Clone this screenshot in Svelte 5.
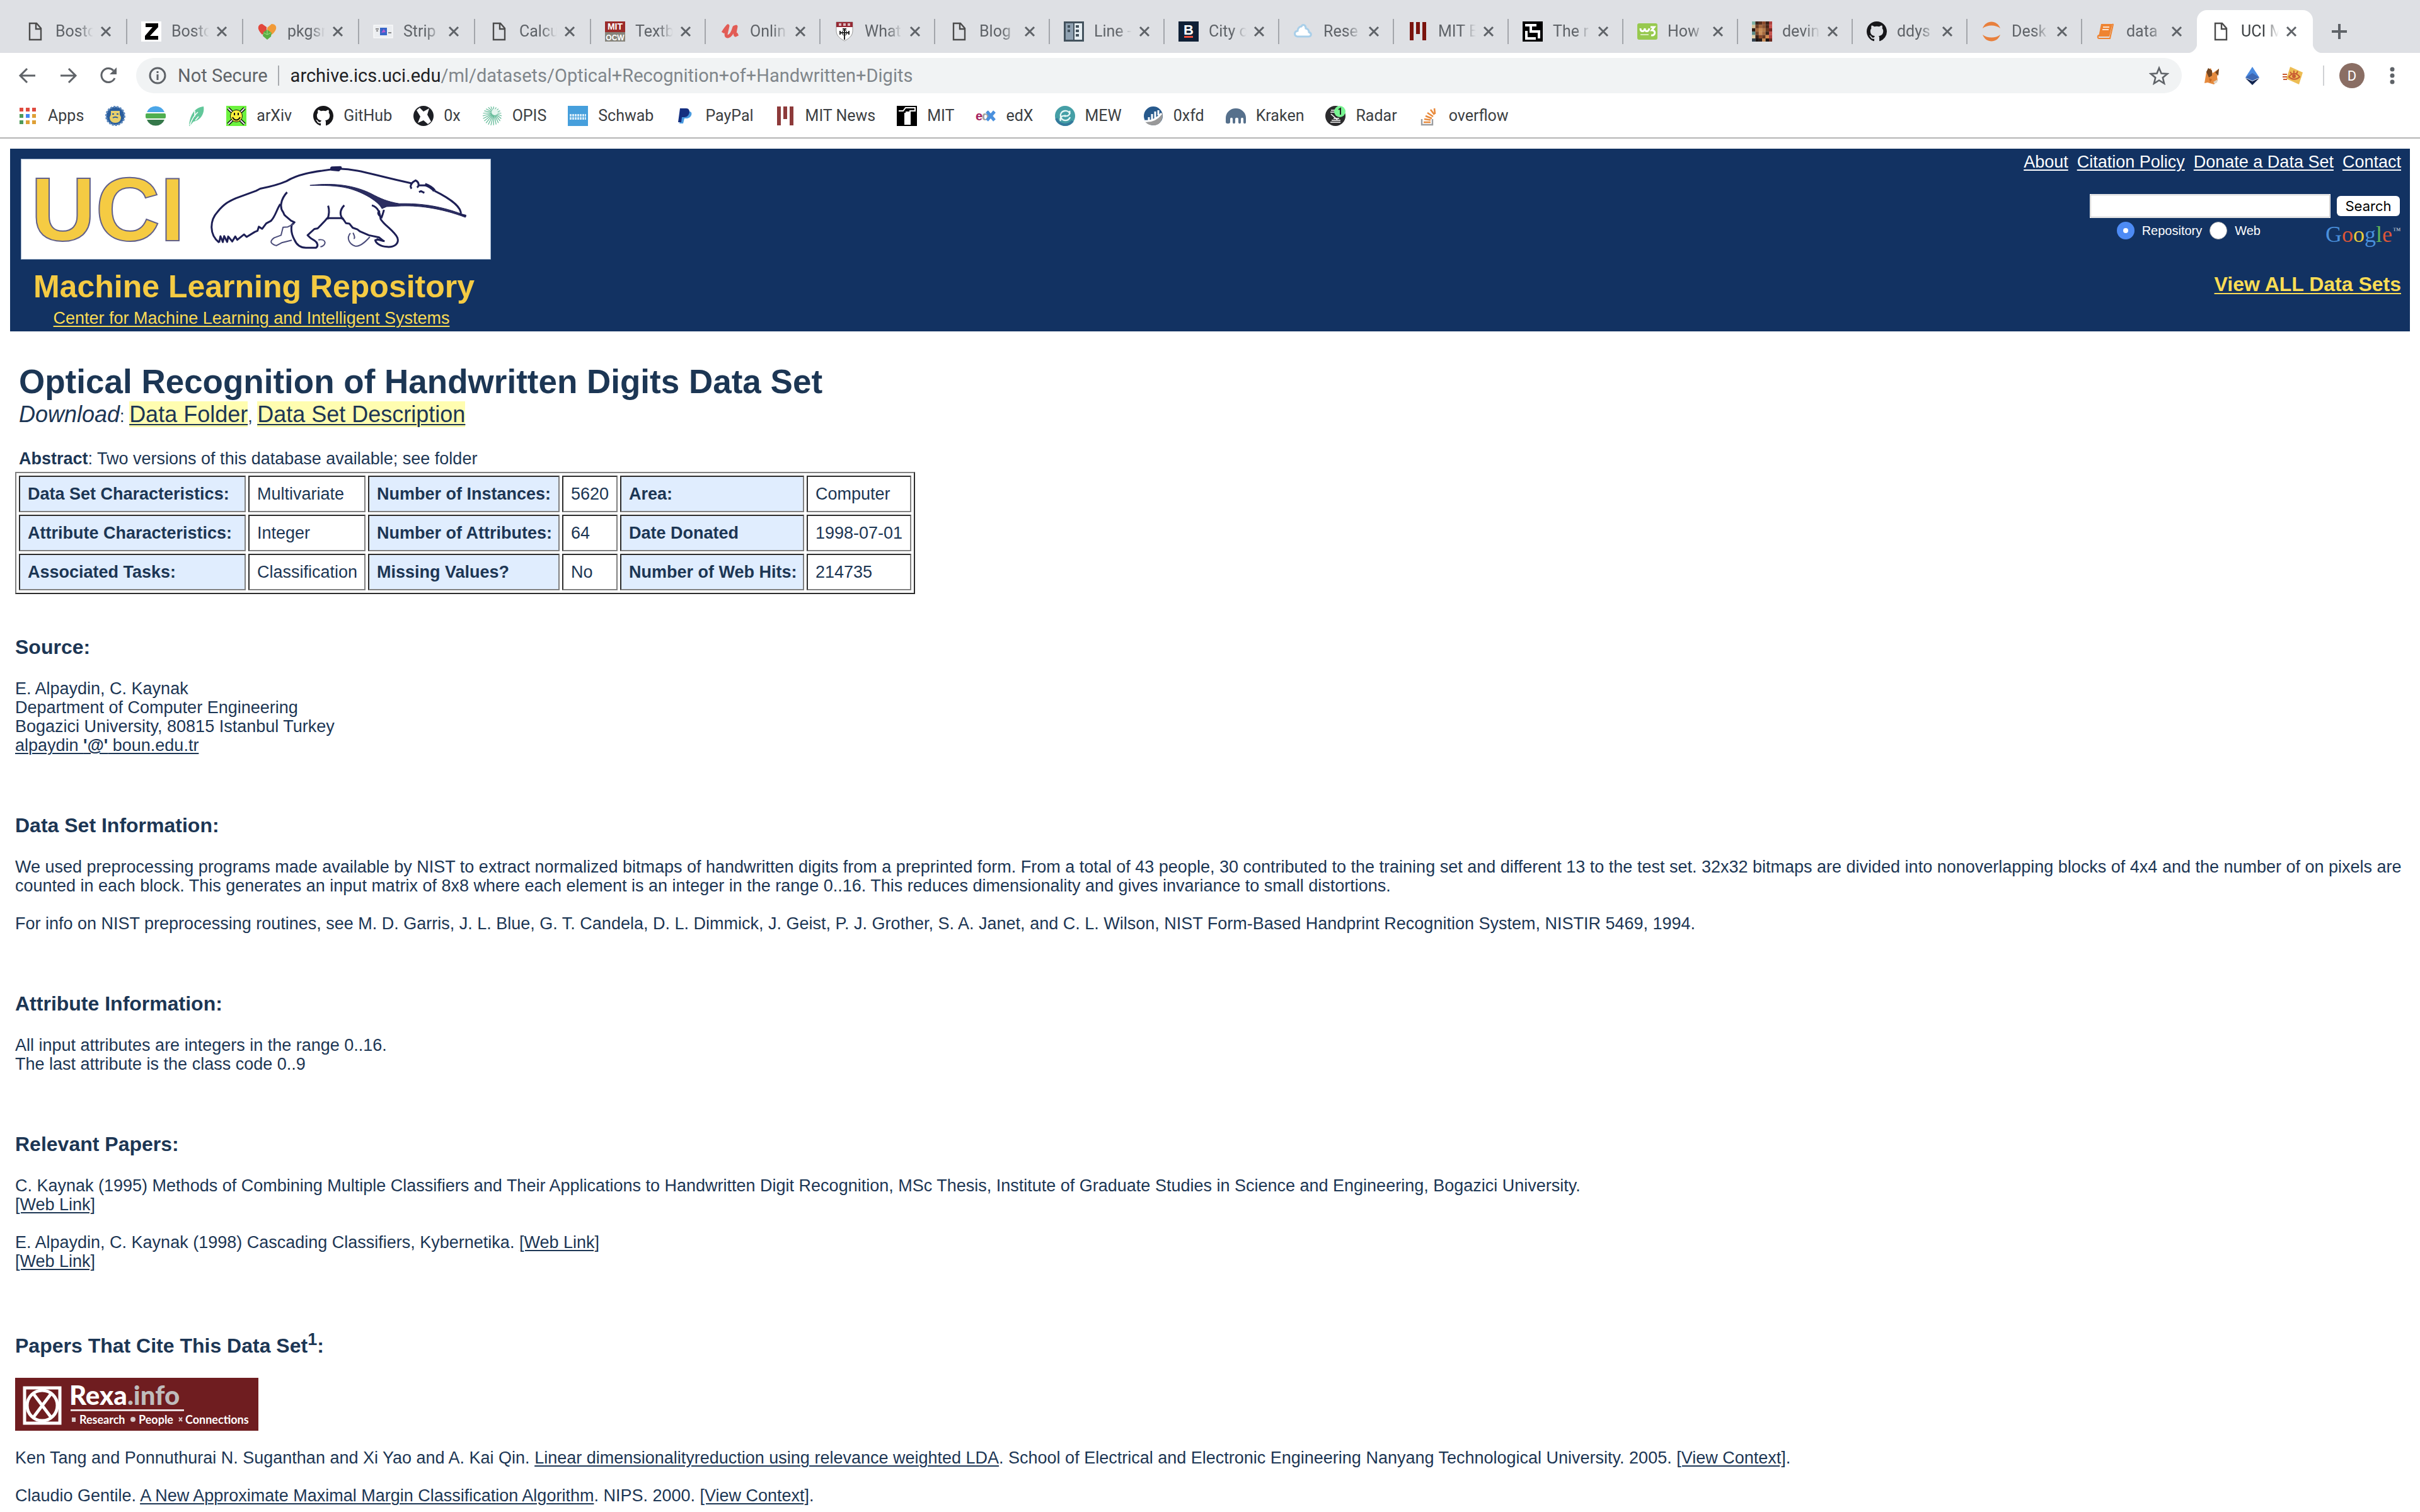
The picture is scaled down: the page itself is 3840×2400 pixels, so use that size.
<script>
  const tabs = [
    { icon: 'page', title: 'Bosto' },
    { icon: 'zillow', title: 'Bosto' },
    { icon: 'hearts', title: 'pkgsr' },
    { icon: 'strip', title: 'Strip' },
    { icon: 'page', title: 'Calcu' },
    { icon: 'ocw', title: 'Textb' },
    { icon: 'udemy', title: 'Onlin' },
    { icon: 'shield', title: 'What' },
    { icon: 'page', title: 'Blog' },
    { icon: 'building', title: 'Line -' },
    { icon: 'boston', title: 'City o' },
    { icon: 'cloud', title: 'Rese' },
    { icon: 'mit', title: 'MIT E' },
    { icon: 'maze', title: 'The r' },
    { icon: 'w3', title: 'How' },
    { icon: 'photo', title: 'devin' },
    { icon: 'github', title: 'ddys' },
    { icon: 'jupyter', title: 'Desk' },
    { icon: 'book', title: 'data' },
    { icon: 'page', title: 'UCI M', active: true }
  ];

  const bookmarks = [
    { icon: 'apps', label: 'Apps' },
    { icon: 'seal', label: '' },
    { icon: 'stripes', label: '' },
    { icon: 'feather', label: '' },
    { icon: 'arxiv', label: 'arXiv' },
    { icon: 'github', label: 'GitHub' },
    { icon: 'zerox', label: '0x' },
    { icon: 'opis', label: 'OPIS' },
    { icon: 'schwab', label: 'Schwab' },
    { icon: 'paypal', label: 'PayPal' },
    { icon: 'mitnews', label: 'MIT News' },
    { icon: 'mitt', label: 'MIT' },
    { icon: 'edx', label: 'edX' },
    { icon: 'mew', label: 'MEW' },
    { icon: 'oxfd', label: '0xfd' },
    { icon: 'kraken', label: 'Kraken' },
    { icon: 'radar', label: 'Radar' },
    { icon: 'overflow', label: 'overflow' }
  ];

  const facts = [
    ['Data Set Characteristics:', 'Multivariate', 'Number of Instances:', '5620', 'Area:', 'Computer'],
    ['Attribute Characteristics:', 'Integer', 'Number of Attributes:', '64', 'Date Donated', '1998-07-01'],
    ['Associated Tasks:', 'Classification', 'Missing Values?', 'No', 'Number of Web Hits:', '214735']
  ];

  const rays = Array.from({ length: 22 }, (_, i) => {
    const a = (i * Math.PI) / 11;
    return { x: 16 + 15 * Math.cos(a), y: 16 + 15 * Math.sin(a) };
  });

  const photo = [
    '#7fb3a6', '#3a2218', '#5a2f1c', '#8c4a2a', '#3a2218', '#b0413e',
    '#d7c39a', '#6b3a20', '#a5683c', '#8a5330', '#4a2616', '#c8524c',
    '#2d1a12', '#a5683c', '#c98e58', '#b47a48', '#6b3a20', '#7b2420',
    '#5c8c88', '#7a4526', '#c98e58', '#a5683c', '#3a2218', '#c8524c',
    '#e0cfa8', '#3a2218', '#8c4a2a', '#6b3a20', '#d58a4e', '#b0413e',
    '#33414f', '#1c1512', '#2a1d18', '#c98e58', '#1c1512', '#6d2a22'
  ];

  let scope = $state('repository');
  let query = $state('');
</script>

{#snippet icon(name)}
  <svg class="icon" viewBox="0 0 32 32" aria-hidden="true">
    {#if name === 'page'}
      <path d="M7 3h11l7 8v18H7z M17 3v9h8" fill="none" stroke="#4b4b4b" stroke-width="2.4" />
    {:else if name === 'zillow'}
      <rect width="32" height="32" fill="#fff" />
      <path d="M7 3h20v6L14 23h13v6H6v-6L18 9H7z" fill="#000" />
    {:else if name === 'hearts'}
      <path d="M15 9l-7-5C4 4 1 7 2 12c1 3 3 6 6 9l7-5z" fill="#e2473c" />
      <path d="M16 10l7-6c5 0 8 3 7 8-1 3-4 7-7 9l-7-5z" fill="#f19a37" />
      <path d="M16 13l7 5-1 6-6 5-7-6 1-6z" fill="#58ae42" />
      <path d="M16 13v8l6-3M16 21l-6-3" stroke="#a5dc88" fill="none" />
    {:else if name === 'strip'}
      <rect x="1" y="6" width="30" height="20" fill="#eceef1" stroke="#fff" />
      <rect x="11" y="10" width="11" height="12" fill="#3766c8" />
      <path d="M13 18l4-6 3 5z" fill="#b65ad0" />
      <path d="M4 12h5M5 15h3M24 18h5" stroke="#888" stroke-width="2" />
    {:else if name === 'ocw'}
      <rect width="32" height="17" fill="#9c2b29" /><rect y="17" width="32" height="15" fill="#86847b" />
      <text x="16" y="13" class="tiny w" text-anchor="middle">MIT</text>
      <text x="16" y="30" class="tiny w narrow" text-anchor="middle">OCW</text>
    {:else if name === 'udemy'}
      <path d="M5 18c3-5 6-9 8-11-1 7-6 18 0 17 5-1 8-8 10-15l3-1c-1 6-3 13-1 14l4-2" fill="none" stroke="#e25c55" stroke-width="5" stroke-linejoin="round" />
    {:else if name === 'shield'}
      <path d="M3 1h26v14c0 9-8 13-13 16C11 28 3 24 3 15z" fill="#fff" stroke="#999" />
      <path d="M3 1h26v8H3z" fill="#962a35" />
      <path d="M7 5h4m3 0h4m3 0h4" stroke="#d9b9bd" stroke-width="4" />
      <path d="M16 11v18M8 18h16M13 12h6M9 15v6M23 15v6" stroke="#222" stroke-width="2" /><circle cx="16" cy="18" r="4" fill="none" stroke="#222" />
    {:else if name === 'building'}
      <rect width="32" height="32" fill="#43525d" /><rect x="3" y="3" width="12" height="26" fill="#8fa1b1" /><rect x="17" y="3" width="12" height="26" fill="#e6eef2" />
      <path d="M6 8h4M6 15h4M19 8h5M19 15h5M19 22h5" stroke="#43525d" stroke-width="4" />
    {:else if name === 'boston'}
      <rect width="32" height="32" fill="#0f2036" />
      <text x="16" y="21" class="mono-b w" text-anchor="middle">B</text>
      <rect x="9" y="23" width="14" height="3" fill="#f0523f" />
    {:else if name === 'cloud'}
      <path d="M7 24c-6-1-6-8 0-9 0-5 4-7 6-7 2-4 7-3 7 3 4 1 5 4 5 6 5 2 4 7-1 7z" fill="#fff" stroke="#a9cfe9" stroke-width="3" />
    {:else if name === 'mit'}
      <path d="M6 1v29M16 1v19M26 1v29" stroke="#7a140e" stroke-width="6" />
    {:else if name === 'maze'}
      <rect width="32" height="32" fill="#000" />
      <path d="M4 6h9v10h13v11M22 6h-9M6 15v12h15" fill="none" stroke="#fff" stroke-width="4" />
    {:else if name === 'w3'}
      <rect y="3" width="32" height="26" rx="3" fill="#97c94f" />
      <path d="M5 11c0 6 6 6 7 0 0 6 6 6 7 0M21 9h6l-4 5c7 0 6 9-1 8" fill="none" stroke="#fff" stroke-width="3" />
      <path d="M5 21h13" stroke="#d8ecbb" stroke-width="2" />
    {:else if name === 'photo'}
      {#each photo as c, i}
        <rect x={(i % 6) * 5.4} y={Math.floor(i / 6) * 5.4} width="5.5" height="5.5" fill={c} />
      {/each}
    {:else if name === 'github'}
      <g transform="scale(2)"><path fill="#17171a" d="M8 0C3.58 0 0 3.58 0 8c0 3.54 2.29 6.53 5.47 7.59.4.07.55-.17.55-.38v-1.49c-2.23.49-2.7-.94-2.7-.94-.36-.92-.89-1.17-.89-1.17-.73-.5.05-.49.05-.49.81.06 1.23.83 1.23.83.72 1.23 1.88.87 2.34.67.07-.52.28-.87.51-1.07-1.78-.2-3.64-.89-3.64-3.95 0-.87.31-1.59.82-2.15-.08-.2-.36-1.02.08-2.12 0 0 .67-.21 2.2.82a7.6 7.6 0 0 1 4 0c1.53-1.04 2.2-.82 2.2-.82.44 1.1.16 1.92.08 2.12.51.56.82 1.27.82 2.15 0 3.07-1.87 3.75-3.65 3.95.29.25.54.73.54 1.48v2.2c0 .21.15.46.55.38A8 8 0 0 0 16 8c0-4.42-3.58-8-8-8z" /></g>
    {:else if name === 'jupyter'}
      <path d="M2 11c5-14 23-14 28 0-7-6-21-6-28 0zM2 21c5 14 23 14 28 0-7 6-21 6-28 0z" fill="#e8803d" />
    {:else if name === 'book'}
      <path d="M8 4h18l-5 20H4z" fill="#ef8432" /><path d="M26 4l1 1-5 22H5c-3 0-3-5 0-5h15" fill="none" stroke="#ef8432" stroke-width="2" />
      <path d="M11 9h10M10 13h10" stroke="#fff" stroke-width="1.6" />
    {:else if name === 'apps'}
      {#each ['#df4a3f', '#df4a3f', '#df4a3f', '#4e9a5a', '#4285f4', '#dfa036', '#4e9a5a', '#dfa036', '#dfa036'] as c, i}
        <rect x={3 + (i % 3) * 10} y={3 + Math.floor(i / 3) * 10} width="6" height="6" fill={c} />
      {/each}
    {:else if name === 'seal'}
      <circle cx="16" cy="16" r="14.5" fill="#2a5d9c" stroke="#5c88bd" stroke-width="3" stroke-dasharray="3 2" />
      <path d="M9 8h14v6l2 4c0 6-4 9-9 9s-9-3-9-9l2-4z" fill="#e8cf6a" /><path d="M11 13h3m4 0h3M12 19c3-2 5-2 8 0" stroke="#2a5d9c" stroke-width="2" fill="none" />
    {:else if name === 'stripes'}
      <path d="M2 10a15 15 0 0 1 28 0z" fill="#4ba6e8" /><rect y="12" width="32" height="8" rx="2" fill="#4fae50" /><path d="M2 22a15 15 0 0 0 28 0z" fill="#35784a" />
    {:else if name === 'feather'}
      <path d="M5 32C6 17 12 3 28 1c2 10-4 22-16 24l-6 7z" fill="#62c79a" /><path d="M6 31C10 20 14 14 19 10M14 8v9M20 17l-5 6" stroke="#fff" stroke-width="1.6" fill="none" />
    {:else if name === 'arxiv'}
      <rect width="32" height="32" fill="#6cf23e" /><path d="M3 4l26 25M29 4L3 29" stroke="#111" stroke-width="5" /><path d="M3 4l26 25M29 4L3 29" stroke="#eee" stroke-width="2" />
      <circle cx="16" cy="16" r="9.5" fill="#fdf13b" stroke="#111" /><path d="M13 11v4m6-4v4M10 18c3 6 9 6 12 0" stroke="#111" stroke-width="2" fill="none" />
    {:else if name === 'zerox'}
      <circle cx="16" cy="16" r="16" fill="#1d1f24" />
      <path d="M5 7l5-4 6 6 9-5-3 10 6 11-5 4-7-6-9 4 4-10z" fill="#fff" />
    {:else if name === 'opis'}
      {#each rays as r}
        <path d="M19 11L{r.x} {r.y}" stroke="#5bb793" stroke-width="1.2" />
      {/each}
      <circle cx="20" cy="10" r="5" fill="#e6f6ef" />
    {:else if name === 'schwab'}
      <rect width="32" height="32" fill="#469fdc" /><path d="M3 15h26M3 20h26" stroke="#d4eaf8" stroke-width="4" stroke-dasharray="3 1" />
    {:else if name === 'paypal'}
      <path d="M13 9h10c6 0 4 11-5 11h-3l-2 8H7z" fill="#4a9be0" /><path d="M8 4h10c8 0 6 14-3 14h-4l-1 8H5z" fill="#142f80" />
    {:else if name === 'mitnews'}
      <path d="M6 1v30M16 1v20M26 1v30" stroke="#8d3a3a" stroke-width="6" />
    {:else if name === 'mitt'}
      <rect width="32" height="32" fill="#000" /><path d="M3 8h7l4-5h15v5h-8v21h-8V11" stroke="#fff" stroke-width="2" fill="none" /><rect x="14" y="9" width="6" height="20" fill="#fff" />
    {:else if name === 'edx'}
      <text x="0" y="23" class="edx" fill="#a62360">e</text><text x="10" y="23" class="edx" fill="#a0a0a0">d</text>
      <path d="M18 9l12 14M30 9L18 23" stroke="#4a90dd" stroke-width="5" />
    {:else if name === 'mew'}
      <circle cx="16" cy="16" r="16" fill="#459fa6" /><path d="M2 20A15 15 0 0 0 28 24" stroke="#347a9c" stroke-width="4" fill="none" />
      <path d="M24 13c-4-9-17-5-15 4 2 8 12 8 15 1M23 8c2 6-3 10-8 7M9 24c-2-6 3-10 8-7" fill="none" stroke="#e7f7f5" stroke-width="2.4" />
    {:else if name === 'oxfd'}
      <circle cx="16" cy="16" r="15" fill="#27598c" /><path d="M3 25c10 2 21-4 27-15 3 11-4 21-13 21-7 0-12-3-14-6z" fill="#999" />
      <path d="M9 23v-5M14 22v-9M19 20V9M24 15V7" stroke="#fff" stroke-width="3" /><path d="M3 24c10 1 19-3 26-12" stroke="#fff" stroke-width="3" fill="none" />
    {:else if name === 'kraken'}
      <path d="M0 26v-7a16 15 0 0 1 32 0v7c0 3-4 3-4 0v-5c0-3-4-3-4 0v5c0 3-4 3-4 0v-5c0-3-5-3-5 0v5c0 3-4 3-4 0v-5c0-3-4-3-4 0v5c0 3-7 3-7 0z" fill="#56708c" />
    {:else if name === 'radar'}
      <circle cx="16" cy="16" r="16" fill="#2b2b2d" />
      <path d="M9 7h12M8 10h10M8 26h16M10 23h14M13 20h9M9 13l10 9" stroke="#fff" stroke-width="1.6" /><circle cx="23" cy="9" r="9" fill="#79f592" /><path d="M21 6l3-2v10" stroke="#222" stroke-width="2" fill="none" />
    {:else if name === 'overflow'}
      <path d="M5 21v9h17v-9" fill="none" stroke="#9b9da0" stroke-width="2.4" /><path d="M8 26h11M9 21l10 1.500M11 16l10 4M14 11l9 6M19 6l6 8M25 4l1 9" stroke="#e88a3c" stroke-width="2.600" />
    {:else if name === 'back'}
      <path d="M28 16H5M15 5L4 16l11 11" class="line" />
    {:else if name === 'forward'}
      <path d="M4 16h23M17 5l11 11-11 11" class="line" />
    {:else if name === 'reload'}
      <path d="M26 20A11 11 0 1 1 24 8" class="line" /><path d="M29 3v11H18z" fill="#5f6368" />
    {:else if name === 'info'}
      <circle cx="16" cy="16" r="12" class="line" /><path d="M16 14v9M16 9v3" class="line" />
    {:else if name === 'star'}
      <path d="M16 4l3.500 8.500 9.500.700-7.200 6 2.300 9.300-8.100-5-8.100 5 2.300-9.300-7.200-6 9.500-.700z" class="line thin" />
    {:else if name === 'fox'}
      <path d="M7 10l7-6 3 8 10-7-3 13 1 6-6 6-10-3-5 1z" fill="#e58a3e" /><path d="M7 10l3-6 6 4v8l-5 3zM27 5l-1 11-5-5z" fill="#714522" /><path d="M18 26l7-4-1 5-4 2z" fill="#ddd4c6" /><path d="M11 20l5 2-3 5z" fill="#c76a23" />
    {:else if name === 'eth'}
      <path d="M16 2l11 17-11 5-11-5z" fill="#4a8ae0" /><path d="M16 12l11 7-11 5-11-5z" fill="#3d68b4" /><path d="M5 20l11 5 11-5-11 11z" fill="#11244f" />
    {:else if name === 'eye'}
      <path d="M12 2l20 9-6 19-20-9z" fill="#edbd54" /><path d="M10 18c5-7 12-7 17 0-5 5-12 5-17 0zM12 10l2 3m4-5v4m6-3l-2 4M0 14h7M0 18h7M1 22h6" fill="none" stroke="#c85b32" stroke-width="2" /><circle cx="18" cy="17" r="3" fill="#c85b32" />
    {:else if name === 'menu'}
      <circle cx="16" cy="6" r="3.500" fill="#5f6368" /><circle cx="16" cy="16" r="3.500" fill="#5f6368" /><circle cx="16" cy="26" r="3.500" fill="#5f6368" />
    {:else if name === 'plus'}
      <path d="M16 4v24M4 16h24" class="line heavy" />
    {/if}
  </svg>
{/snippet}

<div class="browser">
  <div class="tabstrip">
    {#each tabs as tab}
      <div class="tab" class:active={tab.active}>
        {@render icon(tab.icon)}
        <span class="title">{tab.title}</span>
        <button class="close" aria-label="Close tab">
          <svg viewBox="0 0 18 18"><path d="M2 2l14 14M16 2L2 16" /></svg>
        </button>
      </div>
    {/each}
    <button class="bare newtab" aria-label="New tab">{@render icon('plus')}</button>
  </div>

  <div class="toolbar">
    <button class="bare" aria-label="Back">{@render icon('back')}</button>
    <button class="bare" aria-label="Forward">{@render icon('forward')}</button>
    <button class="bare" aria-label="Reload">{@render icon('reload')}</button>
    <div class="omnibox">
      {@render icon('info')}
      <span class="insecure">Not Secure</span>
      <span class="rule"></span>
      <span class="url"><b>archive.ics.uci.edu</b>/ml/datasets/Optical+Recognition+of+Handwritten+Digits</span>
      <button class="bare" aria-label="Bookmark this page">{@render icon('star')}</button>
    </div>
    <button class="bare" aria-label="Fox wallet">{@render icon('fox')}</button>
    <button class="bare" aria-label="Ether">{@render icon('eth')}</button>
    <button class="bare" aria-label="Eye extension">{@render icon('eye')}</button>
    <span class="rule light"></span>
    <button class="avatar" aria-label="Profile">D</button>
    <button class="bare" aria-label="Menu">{@render icon('menu')}</button>
  </div>

  <nav class="bookmarks" aria-label="Bookmarks">
    {#each bookmarks as b}
      <a href="#{b.icon}" aria-label={b.label || b.icon}>
        {@render icon(b.icon)}
        {#if b.label}<span>{b.label}</span>{/if}
      </a>
    {/each}
  </nav>
</div>

<header class="banner">
  <div class="brand">
    <div class="logo">
      <span class="uci">UCI</span>
      <svg class="anteater" viewBox="600 97 856 479" preserveAspectRatio="none" role="img" aria-label="Anteater">
        <path d="M650 497C620 460 622 390 645 350C665 310 680 298 700 284L760 248L772 238C810 226 830 216 850 202C880 172 920 156 1005 142C1070 145 1100 170 1222 212" />
        <path class="thick" d="M985 139L1010 137L1005 147L985 144zM1262 218Q1280 228 1290 248" />
        <path d="M650 497l4-30 7 28 4-29 9 28 3-26 12 24 9-24 6 16 20-26 8 12 24-24 8-5 4-20 10 10 12-26 14-12C818 370 820 340 832 312" />
        <path d="M852 255C832 290 830 330 840 350l4 14 4 6 16 22 10 8-8 12c-4 30 2 55 8 72 6 24 18 38 34 38h30c8-8 4-26-4-34l-12-12-9-14 20-30 10-3 22-37 6-12h36l10 0 10 24 10 2 10 20 14 8 8 10 26 18 30 10 14 18" />
        <path class="faint" d="M872 408l-18 14-14 2-6 38-20 12c-16 18-10 30 6 38l16-14 30-12M945 484c24-6 26 26 6 34" />
        <path d="M974 320q6 30-2 66M1022 318q-20 34-4 68" />
        <path d="M1104 318c20 10 24 40 26 66 12 32 40 56 50 90 6 30-10 46-30 44-24-2-34-20-36-32 10-8 14 2 28 4M1118 480l22 10M1128 345q-12 10 4 30M1140 340q-4 24-8 40" />
        <path class="faint" d="M1048 450q8 26 2 28M1040 452c-12 22-4 52 14 62 16 6 34-26 44-44" />
        <path class="fill" d="M920 222C1000 206 1060 228 1102 262C1130 286 1150 300 1185 310C1250 308 1310 320 1384 368L1382 376C1310 332 1240 316 1180 322L1148 324L1134 334C1124 300 1080 256 1034 236C1000 222 960 222 920 222z" />
        <path d="M1290 248C1340 288 1372 330 1368 362L1384 368M1222 238c-8-16 4-34 12-40 10 8 12 26 4 34M1244 222l20 0M1244 254l6-4 10 8" />
      </svg>
    </div>
    <div class="mlr">Machine Learning Repository</div>
    <a class="cml" href="#cml">Center for Machine Learning and Intelligent Systems</a>
  </div>

  <div class="side">
    <nav class="links" aria-label="Site">
      <a href="#about">About</a>
      <a href="#citation">Citation Policy</a>
      <a href="#donate">Donate a Data Set</a>
      <a href="#contact">Contact</a>
    </nav>
    <form class="search" onsubmit={(e) => e.preventDefault()}>
      <div class="row">
        <input type="text" aria-label="Search" bind:value={query} />
        <button type="submit">Search</button>
      </div>
      <div class="scope">
        <div class="choices">
          <input type="radio" id="repo" name="scope" value="repository" bind:group={scope} />
          <label for="repo">Repository</label>
          <input type="radio" id="web" name="scope" value="web" bind:group={scope} />
          <label for="web">Web</label>
        </div>
        <svg class="google" viewBox="0 0 120 48" role="img" aria-label="Google">
          <text x="0" y="34"><tspan fill="#4a90dc">G</tspan><tspan fill="#dd5638">o</tspan><tspan fill="#e8cd3c">o</tspan><tspan fill="#4a90dc">g</tspan><tspan fill="#63b558">l</tspan><tspan fill="#dd5638">e</tspan></text>
          <text x="107" y="20" class="tm">™</text>
        </svg>
      </div>
    </form>
    <a class="all" href="#datasets">View ALL Data Sets</a>
  </div>
</header>

<main>
  <div class="intro">
    <h1>Optical Recognition of Handwritten Digits Data Set</h1>
    <p class="download"><i>Download</i><small>:&nbsp;</small><a href="#folder">Data Folder</a><small>,&nbsp;</small><a href="#description">Data Set Description</a></p>
    <p class="abstract"><b>Abstract</b>: Two versions of this database available; see folder</p>
  </div>

  <table>
    <colgroup><col class="c1" /><col class="c2" /><col class="c3" /><col class="c4" /><col class="c5" /><col class="c6" /></colgroup>
    <tbody>
      {#each facts as row}
        <tr>
          {#each row as cell, i}
            {#if i % 2 === 0}<th scope="row">{cell}</th>{:else}<td>{cell}</td>{/if}
          {/each}
        </tr>
      {/each}
    </tbody>
  </table>

  <section>
    <h2>Source:</h2>
    <p>E. Alpaydin, C. Kaynak<br />Department of Computer Engineering<br />Bogazici University, 80815 Istanbul Turkey<br /><a href="#mail">alpaydin <b>'@'</b> boun.edu.tr</a></p>
  </section>

  <section>
    <h2>Data Set Information:</h2>
    <p>We used preprocessing programs made available by NIST to extract normalized bitmaps of handwritten digits from a preprinted form. From a total of 43 people, 30 contributed to the training set and different 13 to the test set. 32x32 bitmaps are divided into nonoverlapping blocks of 4x4 and the number of on pixels are counted in each block. This generates an input matrix of 8x8 where each element is an integer in the range 0..16. This reduces dimensionality and gives invariance to small distortions.</p>
    <p>For info on NIST preprocessing routines, see M. D. Garris, J. L. Blue, G. T. Candela, D. L. Dimmick, J. Geist, P. J. Grother, S. A. Janet, and C. L. Wilson, NIST Form-Based Handprint Recognition System, NISTIR 5469, 1994.</p>
  </section>

  <section>
    <h2>Attribute Information:</h2>
    <p>All input attributes are integers in the range 0..16.<br />The last attribute is the class code 0..9</p>
  </section>

  <section>
    <h2>Relevant Papers:</h2>
    <p>C. Kaynak (1995) Methods of Combining Multiple Classifiers and Their Applications to Handwritten Digit Recognition, MSc Thesis, Institute of Graduate Studies in Science and Engineering, Bogazici University.<br /><a href="#web1">[Web Link]</a></p>
    <p>E. Alpaydin, C. Kaynak (1998) Cascading Classifiers, Kybernetika. <a href="#web2">[Web Link]</a><br /><a href="#web3">[Web Link]</a></p>
  </section>

  <section>
    <h2>Papers That Cite This Data Set<sup>1</sup>:</h2>
    <a class="rexa" href="#rexa" aria-label="Rexa.info">
      <svg viewBox="0 0 386 84">
        <rect width="386" height="84" fill="#6f1d20" />
        <rect x="15" y="16" width="56" height="56" fill="none" stroke="#fff" stroke-width="5" />
        <circle cx="43" cy="44" r="24" fill="none" stroke="#fff" stroke-width="5" />
        <path d="M28 24l30 40M58 24L28 64" stroke="#fff" stroke-width="5" />
        <text x="86" y="43" class="name">Rexa<tspan fill="#bfbcbc">.info</tspan></text>
        <rect x="88" y="50" width="180" height="3" fill="#e9dede" />
        <rect x="90" y="63" width="6" height="7" fill="#d8c8c8" />
        <text x="102" y="73" class="sub">Research</text>
        <circle cx="187" cy="66" r="4" fill="#d8c8c8" />
        <text x="196" y="73" class="sub">People</text>
        <path d="M260 63l5 6m0-6l-5 6" stroke="#d8c8c8" stroke-width="2" />
        <text x="270" y="73" class="sub">Connections</text>
      </svg>
    </a>
    <p>Ken Tang and Ponnuthurai N. Suganthan and Xi Yao and A. Kai Qin. <a href="#lda">Linear dimensionalityreduction using relevance weighted LDA</a>. School of Electrical and Electronic Engineering Nanyang Technological University. 2005. <a href="#ctx1">[View Context]</a>.</p>
    <p>Claudio Gentile. <a href="#alma">A New Approximate Maximal Margin Classification Algorithm</a>. NIPS. 2000. <a href="#ctx2">[View Context]</a>.</p>
  </section>
</main>

<style>
  :global(body) {
    margin: 0;
    background: #fff;
    color: #1c3654;
    font: 27px/30px "Liberation Sans", Arial, sans-serif;
  }
  .browser {
    font-family: Roboto, sans-serif;
    color: #5f6368;
  }
  .icon {
    display: block;
    width: 32px;
    height: 32px;
    flex: none;
  }
  .line {
    fill: none;
    stroke: #5f6368;
    stroke-width: 3;
  }
  .thin { stroke-width: 2.6; }
  .heavy { stroke-width: 4; }
  .w { fill: #fff; }
  .tiny { font: bold 14px "Liberation Sans", sans-serif; }
  .narrow { font-size: 12px; }
  .mono-b { font: bold 22px "Liberation Sans", sans-serif; }
  .edx { font: bold 20px "Liberation Sans", sans-serif; }
  .bare {
    display: block;
    padding: 0;
    border: 0;
    background: none;
    flex: none;
  }

  .tabstrip {
    display: flex;
    align-items: center;
    height: 68px;
    padding: 16px 0 0 18px;
    background: #dee0e4;
  }
  .tab {
    display: flex;
    align-items: center;
    box-sizing: border-box;
    flex: 0 1 182px;
    height: 40px;
    padding-left: 22px;
    border-right: 2px solid #a3a6ab;
  }
  .tab:nth-child(-n + 5) { flex-basis: 184px; }
  .tab:nth-child(19) { border-color: transparent; }
  .tab.active {
    position: relative;
    flex-basis: 184px;
    height: 68px;
    border-right: 0;
    border-radius: 16px 16px 0 0;
    background: #fff;
  }
  .tab.active::before,
  .tab.active::after {
    content: "";
    position: absolute;
    bottom: 0;
    width: 16px;
    height: 16px;
  }
  .tab.active::before {
    right: 100%;
    background: radial-gradient(circle at 0 0, transparent 16px, #fff 17px);
  }
  .tab.active::after {
    left: 100%;
    background: radial-gradient(circle at 100% 0, transparent 16px, #fff 17px);
  }
  .title {
    flex: none;
    width: 68px;
    margin-left: 16px;
    white-space: nowrap;
    font-size: 25px;
    mask-image: linear-gradient(to right, #000 36px, transparent 60px);
  }
  .active .title { color: #3c4043; }
  .close {
    display: block;
    flex: none;
    width: 18px;
    height: 18px;
    margin-left: 3px;
    padding: 0;
    border: 0;
    background: none;
  }
  .close svg { display: block; }
  .close path { stroke: #5f6368; stroke-width: 3; }
  .newtab { margin-left: 26px; }

  .toolbar {
    display: flex;
    align-items: center;
    gap: 32px;
    height: 72px;
    padding: 0 28px;
  }
  .omnibox {
    display: flex;
    align-items: center;
    flex: 1;
    height: 56px;
    box-sizing: border-box;
    padding: 0 20px 0 18px;
    margin-left: -4px;
    border-radius: 28px;
    background: #f1f3f4;
    font-size: 29px;
  }
  .insecure { margin: 0 16px; }
  .rule { width: 2px; height: 32px; background: #a8abaf; }
  .light { background: #cfd1d4; }
  .url { flex: 1; margin-left: 18px; color: #80868b; }
  .url b { font-weight: 400; color: #202124; }
  .avatar {
    width: 40px;
    height: 40px;
    margin: 0 -4px 0 -8px;
    padding: 0;
    border: 0;
    border-radius: 50%;
    background: #8a6e64;
    color: #fff;
    font: 22px Roboto, sans-serif;
  }

  .bookmarks {
    display: flex;
    align-items: center;
    gap: 32px;
    height: 56px;
    padding: 0 28px 6px;
    border-bottom: 2px solid #b4b4b4;
  }
  .bookmarks a {
    display: flex;
    align-items: center;
    gap: 16px;
    color: #3c4043;
    font-size: 25px;
    text-decoration: none;
  }
  .bookmarks span { padding-right: 2px; }

  .banner {
    display: flex;
    justify-content: space-between;
    box-sizing: border-box;
    min-height: 290px;
    margin: 16px;
    background: #123262;
  }
  .brand {
    display: flex;
    flex-direction: column;
    padding: 16px 0 0 17px;
    text-align: center;
  }
  .logo {
    display: flex;
    box-sizing: border-box;
    width: 746px;
    height: 160px;
    border: 1px solid #9fb4cc;
    background: #fff;
  }
  .uci {
    width: 272px;
    margin-left: 15px;
    text-align: left;
    font-size: 142px;
    line-height: 160px;
    font-weight: 700;
    color: #f5cb43;
    -webkit-text-stroke: 2px #62618a;
  }
  .anteater { display: block; flex: 1; height: 100%; min-width: 0; }
  .anteater path {
    fill: none;
    stroke: #1d1f55;
    stroke-width: 3;
    vector-effect: non-scaling-stroke;
    stroke-linejoin: round;
  }
  .anteater .faint { stroke: #4a4c7a; stroke-width: 2; }
  .anteater .thick { stroke-width: 5; }
  .anteater .fill { fill: #2b2d60; stroke-width: 1; }
  .mlr {
    margin-top: 18px;
    padding-right: 6px;
    font-size: 50px;
    line-height: 50px;
    font-weight: 700;
    color: #f5cb43;
  }
  .cml { margin-top: 10px; padding-right: 14px; color: #fadc55; }

  .side {
    display: flex;
    flex-direction: column;
    align-items: flex-end;
    padding: 6px 14px 0 0;
    color: #fff;
  }
  .links { display: flex; gap: 14px; }
  .links a { color: #fff; }
  .search { margin-top: 36px; }
  .row { display: flex; align-items: center; justify-content: flex-end; gap: 10px; }
  .row input {
    box-sizing: border-box;
    width: 382px;
    height: 38px;
    padding: 0 6px;
    border: 2px solid #c4c4c4;
    outline: 1px solid #fff;
    outline-offset: -1px;
    font-size: 22px;
  }
  .row button {
    width: 100px;
    height: 32px;
    margin-right: 2px;
    padding: 0;
    border: 0;
    border-radius: 6px;
    background: #fff;
    color: #000;
    font: 22px Inter, sans-serif;
  }
  .scope { display: flex; justify-content: flex-end; gap: 103px; margin-top: 4px; }
  .choices { display: flex; align-items: center; gap: 12px; height: 32px; font-size: 20px; }
  .choices input {
    appearance: none;
    box-sizing: border-box;
    width: 28px;
    height: 28px;
    margin: 0;
    border-radius: 50%;
    background: #fff;
    border: 1px solid #b5b5b5;
  }
  .choices input:checked { border: 10px solid #4d8bf5; }
  .google { display: block; width: 120px; height: 48px; }
  .google text { font: 36px "Liberation Serif", serif; }
  .google .tm { font-size: 13px; fill: #c9cfda; }
  .all { margin-top: 35px; color: #fadc55; font-size: 32px; line-height: 36px; font-weight: 700; }

  main { padding: 33px 24px 12px; }
  a { color: #1c3654; text-decoration-thickness: 2px; text-underline-offset: 3px; }
  h1, h2, p { margin: 0; }
  .intro { padding-left: 6px; }
  h1 { font-size: 53px; line-height: 62px; }
  .download { font-size: 36px; line-height: 42px; }
  .download small { font-size: 27px; }
  .download a { background: #fffdb0; }
  .abstract { margin-top: 31px; }

  table {
    table-layout: fixed;
    width: 1428px;
    margin-top: 6px;
    border: 2px solid;
    border-color: #808080 #2c2c2c #2c2c2c #808080;
    border-spacing: 4px;
  }
  .c1 { width: 360px; }
  .c2 { width: 186px; }
  .c3 { width: 304px; }
  .c4 { width: 88px; }
  .c5 { width: 292px; }
  .c6 { width: 166px; }
  th, td {
    padding: 12px;
    border: 2px solid;
    border-color: #2c2c2c #808080 #808080 #2c2c2c;
    text-align: left;
    white-space: nowrap;
  }
  th { background: #e0edfe; }

  section { margin-top: 94px; }
  table + section { margin-top: 66px; }
  h2 { margin-bottom: 33px; font-size: 32px; line-height: 36px; }
  section p + p { margin-top: 30px; }
  sup { font-size: 27px; line-height: 30px; }
  .rexa { display: block; width: 386px; margin-bottom: 28px; }
  .rexa svg { display: block; }
  .name { font: 900 42px Lato, sans-serif; fill: #fff; }
  .sub { font: bold 18px Lato, sans-serif; fill: #fff; }
</style>
